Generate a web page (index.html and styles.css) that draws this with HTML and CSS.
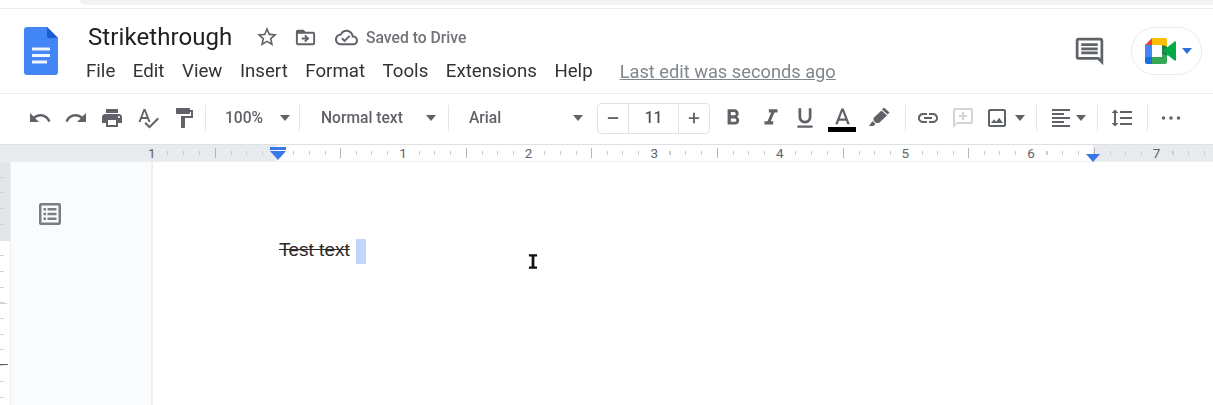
FILE: index.html
```html
<!DOCTYPE html>
<html lang="en">
<head>
<meta charset="utf-8">
<title>Strikethrough - Google Docs</title>
<link rel="stylesheet" href="styles.css">
</head>
<body>
<div class="app">
  <div class="browser-strip"><div class="address"></div></div>
  <header class="header">
    <svg class="logo" viewBox="0 0 34 48">
      <path fill="#4285f4" d="M3 0h20l11 11v34a3 3 0 0 1-3 3H3a3 3 0 0 1-3-3V3a3 3 0 0 1 3-3z"/>
      <path fill="#1a5fd0" d="M23 0l11 11H25a2 2 0 0 1-2-2z"/>
      <path fill="#f1f5fe" d="M8 20.500h18v3H8zM8 27h18v3H8zM8 33.500h15v3H8z"/>
    </svg>
    <div class="doc">
      <div class="title-row">
        <span class="title">Strikethrough</span>
        <svg class="ico star" viewBox="0 0 24 24"><path d="M22 9.240l-7.190-.62L12 2 9.190 8.630 2 9.240l5.460 4.730L5.820 21 12 17.270 18.180 21l-1.630-7.030L22 9.240zM12 15.400l-3.760 2.270 1-4.280-3.320-2.880 4.380-.38L12 6.100l1.710 4.040 4.380.38-3.320 2.880 1 4.280L12 15.400z"/></svg>
        <svg class="ico move" viewBox="0 0 24 24"><path d="M20 6h-8l-2-2H4c-1.100 0-2 .9-2 2v12c0 1.100.9 2 2 2h16c1.100 0 2-.9 2-2V8c0-1.100-.9-2-2-2zm0 12H4V8h16v10zm-8.010-9l-1.410 1.410L12.160 12H8v2h4.160l-1.590 1.590L11.990 17 16 13.010 11.990 9z"/></svg>
        <svg class="ico cloud" viewBox="0 0 24 24"><path d="M19.350 10.040C18.670 6.590 15.640 4 12 4 9.110 4 6.600 5.640 5.350 8.040 2.340 8.360 0 10.910 0 14c0 3.310 2.690 6 6 6h13c2.760 0 5-2.240 5-5 0-2.640-2.050-4.780-4.650-4.960zM19 18H6c-2.210 0-4-1.790-4-4 0-2.050 1.530-3.760 3.560-3.970l1.070-.11.5-.95C8.080 7.140 9.940 6 12 6c2.620 0 4.880 1.860 5.390 4.430l.3 1.500 1.530.11c1.560.1 2.780 1.410 2.780 2.960 0 1.650-1.350 3-3 3zm-9-3.820l-2.090-2.090L6.500 13.500 10 17l6.010-6.010-1.410-1.410z"/></svg>
        <span class="saved">Saved to Drive</span>
      </div>
      <nav class="menu">
        <span>File</span><span>Edit</span><span>View</span><span>Insert</span><span>Format</span><span>Tools</span><span>Extensions</span><span>Help</span>
        <a class="last-edit">Last edit was seconds ago</a>
      </nav>
    </div>
    <div class="header-right">
      <svg class="ico comments" viewBox="0 0 24 24"><path d="M21.990 4c0-1.100-.89-2-1.990-2H4c-1.100 0-2 .9-2 2v12c0 1.100.9 2 2 2h14l4 4-.01-18zM20 4v13.170L18.830 16H4V4h16zM6 12h12v2H6zm0-3h12v2H6zm0-3h12v2H6z"/></svg>
      <div class="meet">
        <svg class="meet-logo" viewBox="0 0 32 26">
          <path fill="#ea4335" d="M7 0v7H0z"/>
          <path fill="#fbbc04" d="M7 0h13a2 2 0 0 1 2 2v6.500l-5 .5V7H7z"/>
          <path fill="#4285f4" d="M0 7h7v12H0z"/>
          <path fill="#1a6fdc" d="M0 19h7v7H2a2 2 0 0 1-2-2z"/>
          <path fill="#34a853" d="M7 19h10v-2.500l5 .5v7a2 2 0 0 1-2 2H7z"/>
          <path fill="#188038" d="M17 7l5 1.500 1 9-6-1z"/>
          <path fill="#00ac47" d="M22 9.500l7-5.500a1 1 0 0 1 2 .8v16.400a1 1 0 0 1-2 .8l-7-5.500z"/>
          <path fill="#0f9d58" d="M17 13l5-3.500v7z"/>
        </svg>
        <span class="meet-caret"></span>
      </div>
    </div>
  </header>

  <div class="toolbar">
    <button class="tool"><svg class="ico" viewBox="0 0 24 24"><path d="M12.500 8c-2.650 0-5.050.99-6.900 2.600L2 7v9h9l-3.620-3.620c1.390-1.160 3.160-1.880 5.120-1.880 3.540 0 6.550 2.310 7.600 5.500l2.370-.78C21.080 11.030 17.150 8 12.500 8z"/></svg></button>
    <button class="tool"><svg class="ico" viewBox="0 0 24 24"><path d="M18.400 10.600C16.550 8.990 14.150 8 11.500 8c-4.650 0-8.580 3.030-9.960 7.220L3.900 16c1.050-3.190 4.050-5.500 7.600-5.500 1.950 0 3.730.72 5.120 1.880L13 16h9V7l-3.600 3.600z"/></svg></button>
    <button class="tool"><svg class="ico" viewBox="0 0 24 24"><path d="M19 8H5c-1.660 0-3 1.340-3 3v6h4v4h12v-4h4v-6c0-1.660-1.340-3-3-3zm-3 11H8v-5h8v5zm3-7c-.55 0-1-.45-1-1s.45-1 1-1 1 .45 1 1-.45 1-1 1zm-1-9H6v4h12V3z"/></svg></button>
    <button class="tool"><svg class="ico" viewBox="0 0 24 24"><path d="M12.450 16h2.090L9.430 3H7.570L2.460 16h2.090l1.120-3h5.640l1.140 3zm-6.020-5L8.500 5.480 10.570 11H6.430zm15.160.59l-8.090 8.090L9.830 16l-1.410 1.410 5.090 5.090L23 13l-1.410-1.410z"/></svg></button>
    <button class="tool"><svg class="ico" viewBox="0 0 24 24"><path d="M18 4V3c0-.55-.45-1-1-1H5c-.55 0-1 .45-1 1v4c0 .55.45 1 1 1h12c.55 0 1-.45 1-1V6h1v4H9v11c0 .55.45 1 1 1h2c.55 0 1-.45 1-1v-9h8V4h-3z"/></svg></button>
    <i class="sep sep-a"></i>
    <div class="select select-zoom"><span>100%</span><b class="caret"></b></div>
    <i class="sep"></i>
    <div class="select select-style"><span>Normal text</span><b class="caret"></b></div>
    <i class="sep"></i>
    <div class="select select-font"><span>Arial</span><b class="caret"></b></div>
    <div class="size">
      <span class="size-btn"><svg class="ico-s" viewBox="0 0 14 14"><path d="M1 6h12v2.200H1z"/></svg></span>
      <span class="size-val">11</span>
      <span class="size-btn"><svg class="ico-s" viewBox="0 0 14 14"><path d="M1 6h4.900V1h2.200v5H13v2.200H8.100V13H5.900V8.200H1z"/></svg></span>
    </div>
    <button class="tool tool-b"><svg class="ico fmt" viewBox="0 0 24 24"><path d="M15.600 10.790c.97-.67 1.650-1.770 1.650-2.790 0-2.260-1.750-4-4-4H7v14h7.040c2.090 0 3.710-1.700 3.710-3.790 0-1.520-.86-2.820-2.150-3.420zM10 6.500h3c.83 0 1.500.67 1.500 1.500s-.67 1.500-1.500 1.500h-3v-3zm3.500 9H10v-3h3.500c.83 0 1.500.67 1.500 1.500s-.67 1.500-1.500 1.500z"/></svg></button>
    <button class="tool tool-i"><svg class="ico fmt" viewBox="0 0 24 24"><path d="M10 4v3h2.210l-3.420 8H6v3h8v-3h-2.210l3.420-8H18V4z"/></svg></button>
    <button class="tool tool-u"><svg class="ico fmt" viewBox="0 0 24 24"><path d="M12 17c3.310 0 6-2.690 6-6V3h-2.500v8c0 1.930-1.570 3.500-3.500 3.500S8.500 12.930 8.500 11V3H6v8c0 3.310 2.690 6 6 6zm-7 2v2h14v-2H5z"/></svg></button>
    <button class="tool tool-a"><svg class="ico a-ico" viewBox="0 0 24 24"><path d="M11 3L5.500 17h2.250l1.120-3h6.250l1.120 3h2.250L13 3h-2zm-1.380 9L12 5.670 14.380 12H9.620z"/></svg><span class="color-bar"></span></button>
    <button class="tool tool-h"><svg class="ico" viewBox="0 0 24 24"><path d="M17 1.500l5.500 5-2 2-5.500-5zM14.500 4.500l5.500 5-8 7.500H9l-2.500-2.500V12zM5.500 15l3 3-2 2H2z"/></svg></button>
    <i class="sep sep-b"></i>
    <button class="tool tool-n"><svg class="ico" viewBox="0 0 24 24"><path d="M3.900 12c0-1.710 1.390-3.100 3.100-3.100h4V7H7c-2.760 0-5 2.240-5 5s2.240 5 5 5h4v-1.900H7c-1.710 0-3.100-1.390-3.100-3.100zM8 13h8v-2H8v2zm9-6h-4v1.900h4c1.710 0 3.100 1.390 3.100 3.100s-1.390 3.100-3.100 3.100h-4V17h4c2.760 0 5-2.240 5-5s-2.240-5-5-5z"/></svg></button>
    <button class="tool tool-n faded"><svg class="ico" viewBox="0 0 24 24"><path d="M20 2H4c-1.100 0-2 .9-2 2v18l4-4h14c1.100 0 2-.9 2-2V4c0-1.100-.9-2-2-2zm0 14H6l-2 2V4h16v12zM11 6h2v3h3v2h-3v3h-2v-3H8V9h3z"/></svg></button>
    <div class="tool-image"><svg class="ico" viewBox="0 0 24 24"><path d="M19 5v14H5V5h14m0-2H5c-1.100 0-2 .9-2 2v14c0 1.100.9 2 2 2h14c1.100 0 2-.9 2-2V5c0-1.100-.9-2-2-2zm-4.860 8.860l-3 3.870L9 13.140 6 17h12l-3.860-5.140z"/></svg><b class="caret"></b></div>
    <i class="sep sep-c"></i>
    <div class="tool-align"><svg class="ico" viewBox="0 0 24 24"><path d="M15 15H3v2h12v-2zm0-8H3v2h12V7zM3 13h18v-2H3v2zm0 8h18v-2H3v2zM3 3v2h18V3H3z"/></svg><b class="caret"></b></div>
    <i class="sep sep-d"></i>
    <button class="tool tool-n"><svg class="ico" viewBox="0 0 24 24"><path d="M6 7h2.500L5 3.500 1.500 7H4v10H1.500L5 20.500 8.500 17H6V7zm4-2v2h12V5H10zm0 14h12v-2H10v2zm0-6h12v-2H10v2z"/></svg></button>
    <i class="sep sep-e"></i>
    <button class="tool tool-n"><svg class="ico" viewBox="0 0 24 24"><path d="M4.500 10.200a1.800 1.800 0 1 0 0 3.600 1.800 1.800 0 0 0 0-3.600zm7.500 0a1.800 1.800 0 1 0 0 3.600 1.800 1.800 0 0 0 0-3.600zm7.500 0a1.800 1.800 0 1 0 0 3.600 1.800 1.800 0 0 0 0-3.600z"/></svg></button>
  </div>

  <div class="ruler">
    <div class="inch first"><span>1</span></div>
    <div class="inch blank"><span></span></div>
    <div class="inch"><span>1</span></div>
    <div class="inch"><span>2</span></div>
    <div class="inch"><span>3</span></div>
    <div class="inch"><span>4</span></div>
    <div class="inch"><span>5</span></div>
    <div class="inch"><span>6</span></div>
    <div class="inch off"><span>7</span></div>
    <i class="indent-bar"></i>
    <i class="indent-left"></i>
    <i class="indent-right"></i>
  </div>

  <main class="workspace">
    <div class="v-ruler"></div>
    <aside class="outline-rail">
      <svg class="toc" viewBox="0 0 24 24"><path d="M3 1h18a2 2 0 0 1 2 2v18a2 2 0 0 1-2 2H3a2 2 0 0 1-2-2V3a2 2 0 0 1 2-2zm.5 2.500v17h17v-17zM5.500 6h2.500v2.500H5.500zm4 0h9v2.500h-9zm-4 4.700h2.500v2.500H5.500zm4 0h9v2.500h-9zm-4 4.800h2.500V18H5.500zm4 0h9V18h-9z"/></svg>
    </aside>
    <section class="page">
      <p class="line"><s class="struck">Test text</s><span class="selection"></span></p>
      <svg class="ibeam" viewBox="0 0 11 16"><path d="M1 0h9v2.500H7V13.500h3V16H1v-2.500h3V2.500H1z"/></svg>
    </section>
  </main>
</div>
</body>
</html>
```
FILE: styles.css
```css
* { box-sizing: border-box; }
html, body { margin: 0; height: 100%; background: #fff; overflow: hidden; }
.app {
  width: 1213px;
  height: 405px;
  display: flex;
  flex-direction: column;
  font-family: Roboto, "Liberation Sans", sans-serif;
  color: #3c4043;
  overflow: hidden;
  filter: blur(0.35px);
}
.ico { width: 24px; height: 24px; fill: #5f6368; display: block; flex: none; }

.browser-strip {
  height: 9px;
  flex: none;
  border-bottom: 1px solid #ececec;
  padding-left: 80px;
}
.address { height: 5px; background: #f1f3f4; border-radius: 0 0 0 6px; }

.header {
  height: 85px;
  flex: none;
  display: flex;
  align-items: flex-start;
  padding-left: 24px;
  border-bottom: 1px solid #ebedef;
}
.logo { width: 34px; height: 48px; margin-top: 18px; flex: none; }
.doc { margin-left: 28px; padding-top: 13px; flex: none; }
.title-row { display: flex; align-items: center; height: 30px; margin-left: 2px; }
.title { font-size: 24px; color: #202124; width: 167px; letter-spacing: 0.08px; }
.star { width: 24px; height: 24px; }
.move { margin-left: 15px; width: 23px; height: 23px; }
.cloud { margin-left: 18px; width: 23px; height: 23px; }
.saved { margin-left: 8px; font-size: 15.700px; font-weight: 500; color: #6f7377; }
.menu { display: flex; align-items: center; margin-top: 5px; height: 28px; font-size: 18.700px; color: #303437; }
.menu span { margin-right: 17.500px; }
.last-edit { margin-left: 9.500px; font-size: 18.250px; color: #80868b; text-decoration: underline; }
.header-right { margin-left: auto; display: flex; align-items: center; margin-top: 18px; flex: none; }
.comments { width: 33px; height: 33px; margin-right: 25px; }
.meet {
  width: 71px;
  height: 48px;
  border: 1px solid #e9ebed;
  border-radius: 24px;
  margin-right: 11px;
  display: flex;
  align-items: center;
  padding-left: 13px;
}
.meet-logo { width: 32px; height: 26px; flex: none; }
.meet-caret { margin-left: 5px; border: 5px solid transparent; border-top: 6px solid #2f6fdb; border-bottom: 0; }

.toolbar {
  height: 50px;
  flex: none;
  display: flex;
  align-items: center;
  padding: 0 0 2px 22px;
}
.tool {
  width: 36px;
  height: 30px;
  padding: 0;
  border: 0;
  background: none;
  display: flex;
  align-items: center;
  justify-content: center;
  position: relative;
  flex: none;
}
.sep { display: block; width: 1px; height: 26px; background: #e3e5e7; flex: none; }
.sep-a { margin-left: 3px; }
.caret { display: block; border: 5.500px solid transparent; border-top: 6px solid #5f6368; border-bottom: 0; flex: none; }
.select {
  display: flex;
  align-items: center;
  justify-content: space-between;
  flex: none;
  font-size: 15.600px;
  font-weight: 500;
  color: #5f6368;
}
.select-zoom { width: 93px; padding: 0 9px 0 19px; }
.select-style { width: 148px; padding: 0 12px 0 21px; }
.select-font { width: 148px; padding: 0 14px 0 20px; }
.size {
  display: flex;
  width: 113px;
  height: 31px;
  border: 1px solid #e0e2e4;
  border-radius: 4px;
  flex: none;
  font-size: 15.600px;
  font-weight: 500;
  color: #4c5053;
}
.size-btn { width: 30px; display: flex; align-items: center; justify-content: center; flex: none; }
.size-val {
  flex: 1;
  text-align: center;
  line-height: 29px;
  border-left: 1px solid #e0e2e4;
  border-right: 1px solid #e0e2e4;
}
.ico-s { width: 12px; height: 12px; fill: #5f6368; }
.fmt { width: 26px; height: 26px; }
.tool-b { margin-left: 5px; }
.tool-i { margin-left: 2px; }
.tool-u { margin-left: -2px; }
.tool-a { margin-left: 1px; }
.a-ico { width: 27px; height: 27px; }
.color-bar { position: absolute; left: 4px; right: 4px; bottom: 1px; height: 5px; background: #000; }
.tool-h { margin-left: 1px; }
.sep-b { margin-left: 8px; }
.tool-n { margin-left: 4px; margin-right: -4px; }
.tool-n + .tool-n { margin-left: 3px; margin-right: 0; }
.faded .ico { fill: #d2d5d8; }
.tool-image { display: flex; align-items: center; width: 46px; margin-left: 4px; flex: none; }
.tool-image .ico { width: 24px; }
.tool-image .caret { margin-left: 5.500px; }
.sep-c { margin-left: 5px; }
.tool-align { display: flex; align-items: center; width: 46px; margin-left: 12px; flex: none; }
.tool-align .caret { margin-left: 3px; }
.sep-d { margin-left: 2px; }
.sep-d + .tool-n { margin-left: 6px; margin-right: 0; }
.sep-e { margin-left: 7px; }
.sep-e + .tool-n { margin-left: 5px; margin-right: 0; }

.ruler {
  height: 18px;
  flex: none;
  position: relative;
  display: flex;
  padding-left: 89px;
  background: linear-gradient(90deg, #e8eaed 277px, #fff 277px, #fff 1093px, #e8eaed 1093px);
  border-top: 1px solid #dfe1e5;
  border-bottom: 1px solid #eceef0;
}
.inch {
  width: 125.600px;
  flex: none;
  display: flex;
  justify-content: center;
  align-items: center;
  font-size: 13.500px;
  color: #5f6368;
  background-image:
    linear-gradient(#b3b6b9, #b3b6b9),
    repeating-linear-gradient(90deg, #cbcdd0 0, #cbcdd0 1px, transparent 1px, transparent 15.700px);
  background-position: 0 3px, 0 6px;
  background-size: 1px 10px, 100% 4px;
  background-repeat: no-repeat;
}
.inch span { width: 16px; text-align: center; background: #fff; line-height: 16px; }
.inch.off span { background: #e8eaed; }
.inch.first {
  background-image:
    linear-gradient(90deg, #e8eaed 50%, transparent 50%),
    repeating-linear-gradient(90deg, #cbcdd0 0, #cbcdd0 1px, transparent 1px, transparent 15.700px);
  background-position: 0 0, 0 6px;
  background-size: 100% 100%, 100% 4px;
}
.inch.first span { background: #e8eaed; }
.inch.blank span { width: 0; }
.indent-bar { position: absolute; left: 270px; top: 2px; width: 16px; height: 3px; background: #3b78e7; }
.indent-left {
  position: absolute; left: 270px; top: 6px;
  border: 8px solid transparent; border-top: 9px solid #3b78e7; border-bottom: 0;
}
.indent-right {
  position: absolute; left: 1086px; top: 9px;
  border: 7.500px solid transparent; border-top: 8px solid #3b78e7; border-bottom: 0;
}

.workspace { flex: 1; display: flex; min-height: 0; }
.v-ruler {
  width: 11px;
  flex: none;
  border-right: 1px solid #eceef0;
  background:
    linear-gradient(#5f6368, #5f6368) 0 202px / 8px 1px no-repeat,
    linear-gradient(#cfd1d4, #cfd1d4) 0 141px / 7px 1px no-repeat,
    repeating-linear-gradient(180deg, transparent 0, transparent 14.700px, #cfd1d4 14.700px, #cfd1d4 15.700px) 0 0 / 4px 100% no-repeat,
    linear-gradient(#e3e5e8 79px, #fff 79px);
}
.outline-rail {
  width: 142px;
  flex: none;
  background: #fafbfc;
  border-right: 2px solid #eeeff1;
  padding: 40px 0 0 27px;
}
.toc { width: 24px; height: 24px; fill: #7a7e82; display: block; }
.page { flex: 1; background: #fff; position: relative; padding: 77px 0 0 126px; }
.line {
  margin: 0;
  display: flex;
  align-items: center;
  height: 25px;
  font: 19px "Liberation Sans", Arial, sans-serif;
  color: #2b2b2b;
}
.struck { margin-bottom: 4px; }
.selection { width: 10px; height: 25px; margin-left: 6px; background: #c3d5fb; }
.ibeam { position: absolute; left: 375px; top: 92px; width: 10px; height: 15px; fill: #111; }
```
